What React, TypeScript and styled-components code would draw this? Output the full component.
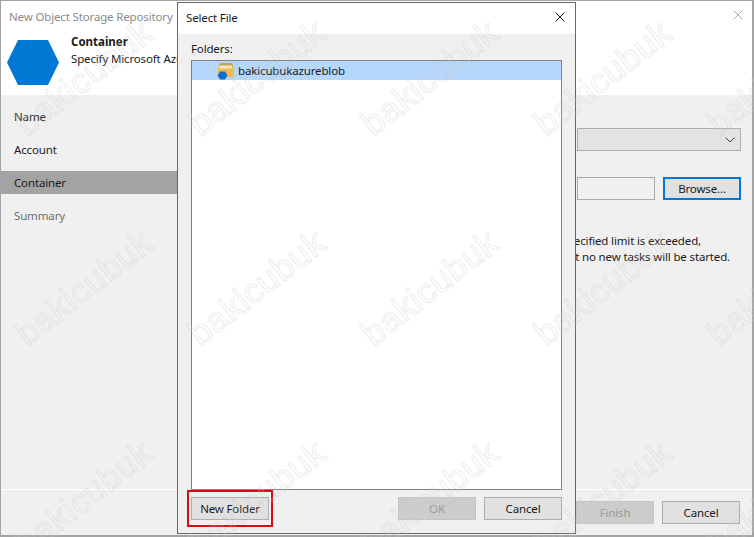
import React from "react";
import styled, { createGlobalStyle } from "styled-components";

const Global = createGlobalStyle`
  html, body { margin: 0; padding: 0; background: #f0f0f0; }
  body { width: 754px; height: 537px; overflow: hidden; font-family: "Noto Sans", "Open Sans", sans-serif; font-size: 11.5px; letter-spacing: -0.15px; color: #1a1a1a; }
  * { box-sizing: border-box; }
`;

const Stage = styled.div`
  position: relative;
  width: 754px;
  height: 537px;
  overflow: hidden;
  background: #f0f0f0;
`;

const Wizard = styled.div`
  width: 754px;
  height: 537px;
  display: flex;
  flex-direction: column;
  border: 2px solid #a3a3a3;
  border-width: 1px 2px 2px 1px;
`;

const WizardHead = styled.header`
  height: 94px;
  flex: none;
  background: #fff;
  display: flex;
  flex-direction: column;
`;

const TitleBar = styled.div`
  height: 33px;
  padding: 0 9px 3px 8px;
  display: flex;
  align-items: center;
  justify-content: space-between;
  color: #8b8b8b;
`;

const Banner = styled.div`
  display: flex;
  gap: 12px;
  padding-left: 6px;
`;

const HexSlot = styled.div`
  margin-top: 6px;
  display: flex;
`;

const BannerText = styled.div`
  display: flex;
  flex-direction: column;
  white-space: nowrap;
  line-height: 18px;
  gap: 1px;
`;

const BannerTitle = styled.div`
  font-weight: 700;
  letter-spacing: 0;
  line-height: 15px;
`;

const WizardBody = styled.div`
  flex: 1;
  display: flex;
  min-height: 0;
`;

const Nav = styled.nav`
  width: 176px;
  flex: none;
  padding-top: 10px;
  display: flex;
  flex-direction: column;
  gap: 10px;
`;

const NavItem = styled.div<{ $active?: boolean; $muted?: boolean }>`
  height: 23px;
  line-height: 23px;
  padding-left: 13px;
  background: ${(p) => (p.$active ? "#a3a3a3" : "transparent")};
  color: ${(p) => (p.$muted ? "#6d6d6d" : "#1a1a1a")};
`;

const Content = styled.div`
  flex: 1;
  display: flex;
  flex-direction: column;
  padding: 33px 11px 0 400px;
`;

const Combo = styled.div`
  height: 23px;
  background: #e3e3e3;
  border: 1px solid #adadad;
  display: flex;
  align-items: center;
  justify-content: flex-end;
  padding-right: 5px;
`;

const PathRow = styled.div`
  display: flex;
  gap: 8px;
  margin-top: 26px;
`;

const PathField = styled.div`
  flex: 1;
  height: 23px;
  background: #f0f0f0;
  border: 1px solid #a9a9a9;
`;

const NoteBlock = styled.div`
  margin-top: 33px;
  margin-left: -100px;
  line-height: 16px;
  white-space: nowrap;
`;

const NoteLine = styled.div<{ $inset: number }>`
  text-align: right;
  padding-right: ${(p) => p.$inset}px;
`;

const WizardFoot = styled.footer`
  height: 46px;
  flex: none;
  border-top: 1px solid #fff;
  display: flex;
  justify-content: flex-end;
  align-items: flex-start;
  gap: 8px;
  padding: 11px 12px 0 0;
`;

const Button = styled.div<{ $disabled?: boolean; $focused?: boolean }>`
  width: 78px;
  height: 23px;
  display: flex;
  align-items: center;
  justify-content: center;
  background: ${(p) => (p.$disabled ? "#cccccc" : "#e1e1e1")};
  border: ${(p) => (p.$focused ? "2px solid #0078d7" : `1px solid ${p.$disabled ? "#c4c4c4" : "#adadad"}`)};
  color: ${(p) => (p.$disabled ? "#9a9a9a" : "#1a1a1a")};
  white-space: nowrap;
`;

const Dialog = styled.section`
  position: absolute;
  left: 177px;
  top: 2px;
  width: 399px;
  height: 532px;
  border: 1px solid #666;
  background: #f0f0f0;
  display: flex;
  flex-direction: column;
`;

const DialogTitle = styled.div`
  height: 31px;
  flex: none;
  background: #fff;
  display: flex;
  align-items: center;
  justify-content: space-between;
  padding: 0 10px 2px 8px;
`;

const CloseSlot = styled.div`
  display: flex;
  margin-top: -2px;
`;

const DialogBody = styled.div`
  flex: 1;
  min-height: 0;
  display: flex;
  flex-direction: column;
  padding: 6px 13px 0 13px;
`;

const FieldLabel = styled.div`
  height: 20px;
  line-height: 18px;
`;

const FolderList = styled.div`
  height: 430px;
  flex: none;
  background: #fff;
  border: 1px solid #828282;
`;

const FolderRow = styled.div`
  height: 19px;
  display: flex;
  align-items: center;
  gap: 4px;
  padding-left: 25px;
  background: #b5d7fb;
`;

const DialogFoot = styled.div`
  display: flex;
  align-items: center;
  gap: 8px;
  padding-top: 7px;
`;

const Spacer = styled.div`
  flex: 1;
`;

const Highlight = styled.div`
  position: relative;
  display: flex;
`;

const HighlightRing = styled.div`
  position: absolute;
  inset: -7px -4px -7px -4px;
  border: 2px solid #d40d12;
  pointer-events: none;
`;

const WatermarkLayer = styled.div`
  position: absolute;
  inset: 0;
  overflow: hidden;
  pointer-events: none;
`;

const WatermarkGrid = styled.div`
  position: absolute;
  left: -2px;
  top: -27px;
  display: grid;
  grid-template-columns: repeat(5, 173px);
  grid-auto-rows: 210px;
`;

const WatermarkCell = styled.div`
  display: flex;
  align-items: center;
  justify-content: center;
`;

const WatermarkText = styled.span`
  display: block;
  transform: rotate(-38deg);
  font-family: "Liberation Sans", sans-serif;
  font-size: 35px;
  letter-spacing: 0.5px;
  color: transparent;
  -webkit-text-stroke: 1px rgba(185, 185, 185, 0.3);
  filter: drop-shadow(1px 1px 0 rgba(255, 255, 255, 0.5));
`;

const Cross = ({ size, color }: { size: number; color: string }) => (
  <svg width={size} height={size} viewBox="0 0 10 10" fill="none" stroke={color} strokeWidth="1">
    <path d="M0.5 0.5 9.5 9.5M9.5 0.5 0.5 9.5" />
  </svg>
);

const Hexagon = () => (
  <svg width="52" height="45" viewBox="0 0 52 45">
    <polygon points="11,0 41,0 52,22.5 41,45 11,45 0,22.5" fill="#0078d4" />
  </svg>
);

const FolderIcon = () => (
  <svg width="17" height="18" viewBox="0 0 17 18">
    <path d="M2 2.5Q2 1 3.5 1H14Q16 1 16 3V5H2Z" fill="#c9a35a" />
    <path d="M1 4.5H16.5V15H1Z" fill="#eeb94e" />
    <path d="M2.5 3.5H15V6.5H2.5Z" fill="#f7e8c4" />
    <polygon points="3,9.5 8,9.5 10.5,13.5 8,17.5 3,17.5 0.5,13.5" fill="#0f6fd0" />
  </svg>
);

const Chevron = () => (
  <svg width="10" height="6" viewBox="0 0 10 6" fill="none" stroke="#444" strokeWidth="1">
    <path d="M0.5 0.5 5 5 9.5 0.5" />
  </svg>
);

const marks = Array.from({ length: 15 }, (_, i) => i);

export default function App() {
  return (
    <Stage>
      <Global />
      <Wizard>
        <WizardHead>
          <TitleBar>
            <span>New Object Storage Repository</span>
            <CloseSlot>
              <Cross size={10} color="#a8a8a8" />
            </CloseSlot>
          </TitleBar>
          <Banner>
            <HexSlot>
              <Hexagon />
            </HexSlot>
            <BannerText>
              <BannerTitle>Container</BannerTitle>
              <span>Specify Microsoft Azure</span>
            </BannerText>
          </Banner>
        </WizardHead>
        <WizardBody>
          <Nav>
            <NavItem>Name</NavItem>
            <NavItem>Account</NavItem>
            <NavItem $active>Container</NavItem>
            <NavItem $muted>Summary</NavItem>
          </Nav>
          <Content>
            <Combo>
              <Chevron />
            </Combo>
            <PathRow>
              <PathField />
              <Button $focused>Browse...</Button>
            </PathRow>
            <NoteBlock>
              <NoteLine $inset={40}>the specified limit is exceeded,</NoteLine>
              <NoteLine $inset={11}>tasks but no new tasks will be started.</NoteLine>
            </NoteBlock>
          </Content>
        </WizardBody>
        <WizardFoot>
          <Button $disabled>Finish</Button>
          <Button>Cancel</Button>
        </WizardFoot>
      </Wizard>
      <Dialog>
        <DialogTitle>
          <span>Select File</span>
          <CloseSlot>
            <Cross size={10} color="#1a1a1a" />
          </CloseSlot>
        </DialogTitle>
        <DialogBody>
          <FieldLabel>Folders:</FieldLabel>
          <FolderList>
            <FolderRow>
              <FolderIcon />
              <span>bakicubukazureblob</span>
            </FolderRow>
          </FolderList>
          <DialogFoot>
            <Highlight>
              <Button>New Folder</Button>
              <HighlightRing />
            </Highlight>
            <Spacer />
            <Button $disabled>OK</Button>
            <Button>Cancel</Button>
          </DialogFoot>
        </DialogBody>
      </Dialog>
      <WatermarkLayer>
        <WatermarkGrid>
          {marks.map((i) => (
            <WatermarkCell key={i}>
              <WatermarkText>bakicubuk</WatermarkText>
            </WatermarkCell>
          ))}
        </WatermarkGrid>
      </WatermarkLayer>
    </Stage>
  );
}
